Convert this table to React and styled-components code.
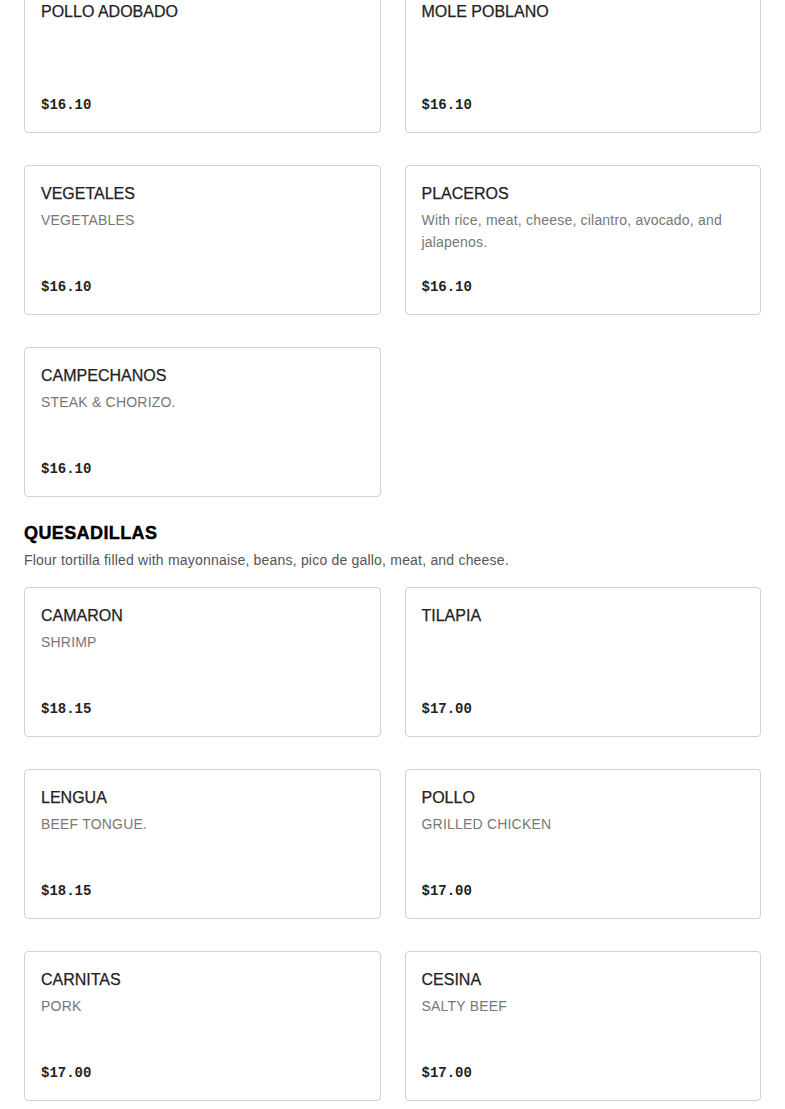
import React from "react";
import styled, { createGlobalStyle } from "styled-components";

const Global = createGlobalStyle`
  html, body { margin: 0; padding: 0; background: #fff; }
  body { font-family: "Liberation Sans", Arial, sans-serif; color: #222; }
`;

const Page = styled.div`
  margin-top: -17px;
  padding: 0 24px 24px;
`;

const Section = styled.section`
  display: flex;
  flex-direction: column;
  & + & { margin-top: 24px; }
`;

const SectionTitle = styled.h2`
  margin: 0;
  font-family: "Liberation Sans", Arial, sans-serif;
  font-weight: 900;
  font-size: 18px;
  line-height: 24px;
  letter-spacing: 0.4px;
  color: #000;
  -webkit-text-stroke: 0.4px #000;
`;

const SectionNote = styled.p`
  margin: 4px 0 16px;
  font-size: 14px;
  line-height: 22px;
  letter-spacing: 0.2px;
  color: #555;
`;

const Grid = styled.div`
  display: grid;
  grid-template-columns: 1fr 1fr;
  column-gap: 24px;
  row-gap: 32px;
`;

const Card = styled.div`
  box-sizing: border-box;
  min-height: 150px;
  border: 1px solid #d2d2d2;
  border-radius: 4px;
  padding: 16px 16px 17px;
  display: flex;
  flex-direction: column;
  background: #fff;
`;

const Name = styled.div`
  font-size: 16px;
  line-height: 24px;
  color: #222;
  -webkit-text-stroke: 0.25px #222;
`;

const Desc = styled.div`
  margin-top: 3px;
  font-size: 14px;
  line-height: 22px;
  letter-spacing: 0.2px;
  color: #777;
`;

const Price = styled.div`
  margin-top: auto;
  font-family: "Liberation Mono", "Courier New", monospace;
  font-weight: 700;
  font-size: 14px;
  line-height: 20px;
  color: #222;
`;

const sections = [
  {
    items: [
      { name: "POLLO ADOBADO", price: "$16.10" },
      { name: "MOLE POBLANO", price: "$16.10" },
      { name: "VEGETALES", desc: "VEGETABLES", price: "$16.10" },
      {
        name: "PLACEROS",
        desc: "With rice, meat, cheese, cilantro, avocado, and jalapenos.",
        price: "$16.10",
      },
      { name: "CAMPECHANOS", desc: "STEAK & CHORIZO.", price: "$16.10" },
    ],
  },
  {
    title: "QUESADILLAS",
    note: "Flour tortilla filled with mayonnaise, beans, pico de gallo, meat, and cheese.",
    items: [
      { name: "CAMARON", desc: "SHRIMP", price: "$18.15" },
      { name: "TILAPIA", price: "$17.00" },
      { name: "LENGUA", desc: "BEEF TONGUE.", price: "$18.15" },
      { name: "POLLO", desc: "GRILLED CHICKEN", price: "$17.00" },
      { name: "CARNITAS", desc: "PORK", price: "$17.00" },
      { name: "CESINA", desc: "SALTY BEEF", price: "$17.00" },
    ],
  },
];

export default function App() {
  return (
    <>
      <Global />
      <Page>
        {sections.map((s, i) => (
          <Section key={i}>
            {s.title && <SectionTitle>{s.title}</SectionTitle>}
            {s.note && <SectionNote>{s.note}</SectionNote>}
            <Grid>
              {s.items.map((it) => (
                <Card key={it.name}>
                  <Name>{it.name}</Name>
                  {it.desc && <Desc>{it.desc}</Desc>}
                  <Price>{it.price}</Price>
                </Card>
              ))}
            </Grid>
          </Section>
        ))}
      </Page>
    </>
  );
}
